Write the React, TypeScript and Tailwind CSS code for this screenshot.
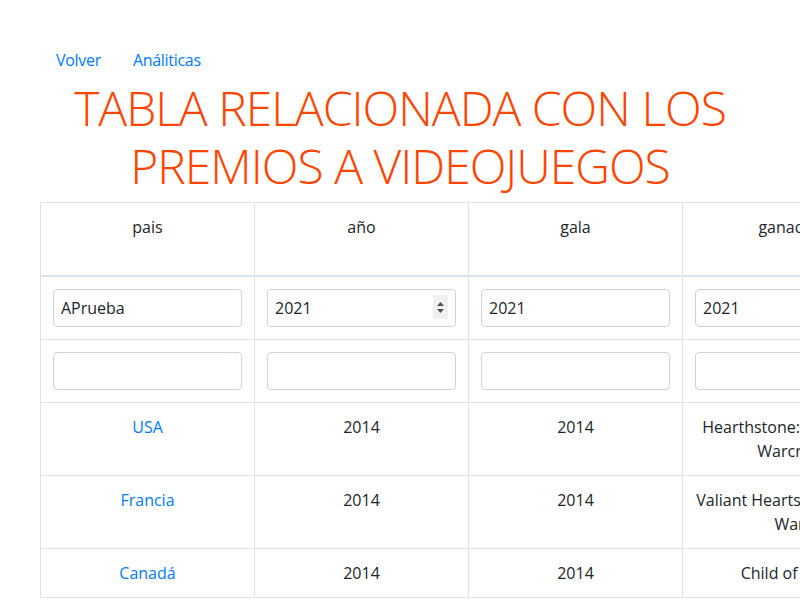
import React from "react";

const columns = ["pais", "año", "gala", "ganador", "juego nominado en la categoría", "plataforma"];

const rows = [
  { pais: "USA", anio: "2014", gala: "2014", ganador: "Hearthstone: Heroes of Warcraft", juego: "Destiny", plataforma: "PC" },
  { pais: "Francia", anio: "2014", gala: "2014", ganador: "Valiant Hearts: The Great War", juego: "Alien: Isolation", plataforma: "PS4" },
  { pais: "Canadá", anio: "2014", gala: "2014", ganador: "Child of Light", juego: "Far Cry 4", plataforma: "Xbox One" },
];

const font = "font-['Open_Sans','Liberation_Sans',sans-serif]";
const cell = "border border-[#dee2e6] p-3 align-top text-center";
const input =
  "block w-full h-[38px] px-[7px] py-1.5 text-base text-[#212529] bg-white border border-[#ced4da] rounded";

export default function App() {
  return (
    <div className={`h-screen overflow-hidden bg-white text-[#212529] text-base leading-normal ${font}`}>
      <div className="pt-10 pl-10">
        <nav className="flex">
          <a href="#" className="px-4 py-2 text-[#007bff] tracking-[-0.3px]">
            Volver
          </a>
          <a href="#" className="px-4 py-2 text-[#007bff] tracking-[-0.3px]">
            Análiticas
          </a>
        </nav>
      </div>

      <h1 className="text-center text-[48px] font-light leading-[1.2] tracking-[-1px] text-[#ff4500] mb-2 -mt-px">
        TABLA RELACIONADA CON LOS PREMIOS A VIDEOJUEGOS
      </h1>

      <div className="pl-10">
        <table className="table-fixed border-collapse w-[1283px]">
          <thead>
            <tr>
              {columns.map((c) => (
                <th key={c} className={`${cell} font-normal border-b-2 w-[214px]`}>
                  {c}
                </th>
              ))}
            </tr>
          </thead>
          <tbody>
            <tr>
              <td className={cell}>
                <input className={input} defaultValue="APrueba" />
              </td>
              <td className={cell}>
                <div className="relative">
                  <input
                    className={`${input} [appearance:textfield] [&::-webkit-inner-spin-button]:appearance-none`}
                    type="number"
                    defaultValue="2021"
                  />
                  <div className="pointer-events-none absolute right-[8px] top-[6px] flex h-[24px] w-[15px] flex-col items-center justify-center gap-[3px] bg-[#f0f0f0]">
                    <svg width="7" height="4" viewBox="0 0 7 4">
                      <path d="M0 4L3.5 0L7 4Z" fill="#505050" />
                    </svg>
                    <svg width="7" height="4" viewBox="0 0 7 4">
                      <path d="M0 0L3.5 4L7 0Z" fill="#505050" />
                    </svg>
                  </div>
                </div>
              </td>
              <td className={cell}>
                <input className={input} defaultValue="2021" />
              </td>
              <td className={cell}>
                <input className={input} defaultValue="2021" />
              </td>
              <td className={cell}>
                <input className={input} />
              </td>
              <td className={cell}>
                <input className={input} />
              </td>
            </tr>
            <tr>
              {columns.map((c) => (
                <td key={c} className={cell}>
                  <input className={input} />
                </td>
              ))}
            </tr>
            {rows.map((r) => (
              <tr key={r.pais}>
                <td className={cell}>
                  <a href="#" className="text-[#007bff]">
                    {r.pais}
                  </a>
                </td>
                <td className={cell}>{r.anio}</td>
                <td className={cell}>{r.gala}</td>
                <td className={cell}>{r.ganador}</td>
                <td className={cell}>{r.juego}</td>
                <td className={cell}>{r.plataforma}</td>
              </tr>
            ))}
          </tbody>
        </table>
      </div>
    </div>
  );
}
